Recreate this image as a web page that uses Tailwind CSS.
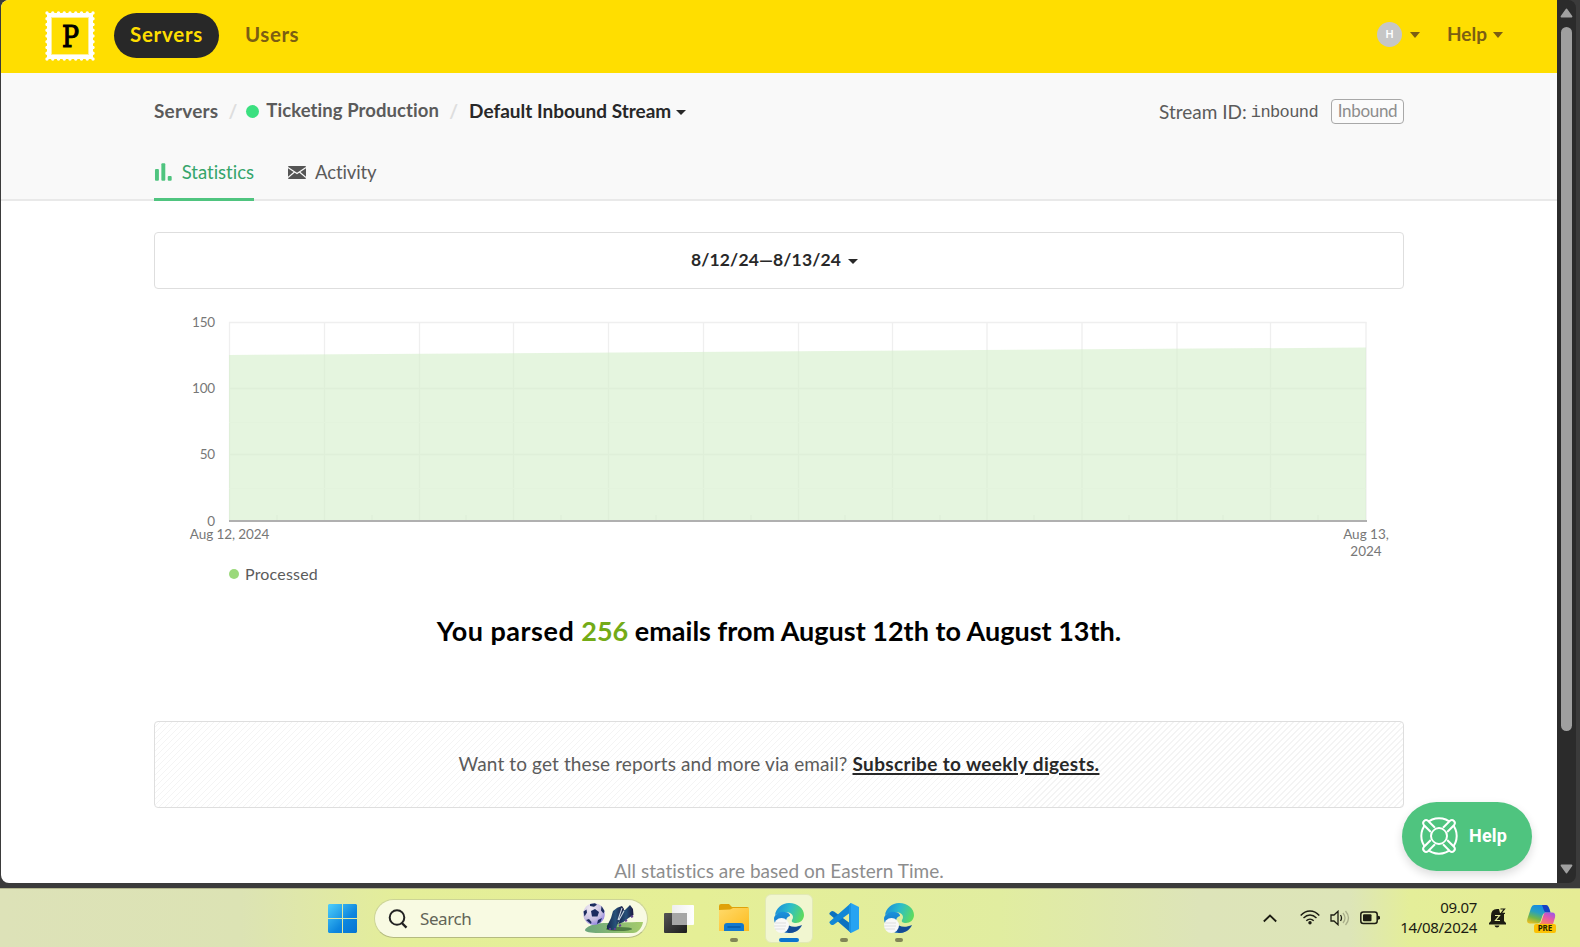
<!DOCTYPE html>
<html lang="en">
<head>
<meta charset="utf-8">
<title>Default Inbound Stream – Statistics</title>
<script src="https://cdn.jsdelivr.net/npm/@tailwindcss/browser@4"></script>
</head>
<body class="w-[1580px] h-[947px] overflow-hidden bg-[#3b3b3b] font-[Lato,sans-serif] flex flex-col whitespace-nowrap">

<!-- browser window -->
<div class="h-[888px] pl-px pr-1 pb-[5px] flex">
  <div class="relative w-[1556px] h-[883px] bg-white rounded-l-lg overflow-hidden flex flex-col [font-variant-ligatures:none]">

    <header class="h-[73px] shrink-0 bg-[#ffde00] flex items-start pl-[44px] pr-[54px] text-[#7b5e13] font-bold">
      <svg class="mt-[11px] w-[50px] h-[50px]" viewBox="0 0 50 50">
        <rect x="2" y="2" width="46" height="46" fill="#fff"/>
        <rect x="2" y="2" width="46" height="46" fill="none" stroke="#fff" stroke-width="3.4" stroke-linecap="round" stroke-dasharray="0.01 5.740"/>
        <rect x="6.500" y="6.500" width="37" height="37" fill="#ffde00" stroke="#fff09a" stroke-width="1"/>
        <text x="25.500" y="36" text-anchor="middle" class="font-['DejaVu_Serif',serif] font-normal text-[30px]" fill="#000" stroke="#000" stroke-width="1.200" textLength="17" lengthAdjust="spacingAndGlyphs">P</text>
      </svg>
      <div class="mt-[13px] ml-[19px] w-[105px] h-[45px] rounded-full bg-[#282828] text-[#ffde00] text-[20.5px] tracking-[0.75px] flex items-center justify-center pb-[2px]">Servers</div>
      <div class="mt-[13px] ml-[26px] h-[45px] text-[20.5px] tracking-[0.55px] flex items-center pb-[2px]">Users</div>
      <div class="mt-[22px] ml-auto size-[25px] rounded-full bg-[#c6c6c6] text-white text-[10.500px] flex items-center justify-center pt-px">H</div>
      <svg class="mt-[32px] ml-[8px] w-[10px] h-[6px]" viewBox="0 0 10 6"><path d="M0 0h10L5 6z" fill="#7b5e13"/></svg>
      <div class="mt-[13px] ml-[27px] h-[45px] text-[19px] flex items-center pb-[2px]">Help</div>
      <svg class="mt-[32px] ml-[6px] w-[10px] h-[6px]" viewBox="0 0 10 6"><path d="M0 0h10L5 6z" fill="#7b5e13"/></svg>
    </header>

    <section class="h-[128px] shrink-0 bg-[#f9f9f9] border-b-2 border-[#e9e9e9] text-[#5b5b5b]">
      <div class="w-[1250px] mx-auto flex flex-col">
        <div class="h-[76px] flex items-center text-[19px] font-bold">
          <span class="tracking-[0.2px]">Servers</span>
          <span class="ml-[10px] w-[9px] text-[#dedede] text-center">/</span>
          <span class="ml-[9px] size-[13px] rounded-full bg-[#3be080]"></span>
          <span class="ml-[7px] text-[18.5px] tracking-[0.08px]">Ticketing Production</span>
          <span class="ml-[10px] w-[9px] text-[#dedede] text-center">/</span>
          <span class="ml-[11px] text-[#282828]">Default Inbound Stream</span>
          <svg class="ml-[5px] mt-[3px] w-[10px] h-[5px]" viewBox="0 0 10 5"><path d="M0 0h10L5 5z" fill="#282828"/></svg>
          <span class="ml-auto font-normal mt-[2px]">Stream ID:</span>
          <span class="ml-[4px] mt-[4px] font-normal font-['Liberation_Mono',monospace] text-[17px] tracking-[-0.600px]">inbound</span>
          <span class="ml-[13px] w-[73px] h-[25px] border border-[#a8a8a8] rounded-[4px] bg-white/30 text-[#8d8d8d] text-[17px] font-normal tracking-[-0.3px] flex items-center justify-center">Inbound</span>
        </div>
        <nav class="h-[52px] flex items-start text-[18.5px]">
          <div class="h-[52px] w-[100px] border-b-3 border-[#4fc47f] text-[#35a56b] flex items-start pt-[12px]">
            <svg class="w-[18px] h-[20px] mt-[1px]" viewBox="0 0 18 20" fill="#4fc47f"><rect x="1" y="7" width="4" height="12" rx="1"/><rect x="7.500" y="1" width="4" height="18" rx="1"/><rect x="14" y="14" width="4" height="5" rx="1"/></svg>
            <span class="ml-[10px] leading-[22px]">Statistics</span>
          </div>
          <div class="ml-[34px] flex items-start pt-[12px]">
            <svg class="w-[18px] h-[13px] mt-[5px]" viewBox="0 0 18 13"><rect width="18" height="13" rx="1" fill="#555"/><path d="M0 1.500l9 6 9-6M0 11.500l6.500-5.500M18 11.500l-6.500-5.500" fill="none" stroke="#f9f9f9" stroke-width="1.200"/></svg>
            <span class="ml-[9px] leading-[22px] tracking-[-0.1px]">Activity</span>
          </div>
        </nav>
      </div>
    </section>

    <main class="w-[1250px] mx-auto pt-[31px] flex flex-col">
      <div class="h-[57px] border border-[#dedede] rounded-[4px] flex items-center justify-center pr-[9px] text-[17.5px] font-bold text-[#282828]">
        <span class="tracking-[0.13px]">8/12/24—8/13/24</span>
        <svg class="ml-[7px] mt-px w-[10px] h-[5px]" viewBox="0 0 10 5"><path d="M0 0h10L5 5z" fill="#282828"/></svg>
      </div>

      <!-- chart -->
      <svg class="mt-[11px] w-[1250px] h-[262px]" viewBox="0 0 1250 262">
        <g stroke="#efefef" stroke-width="1.300">
          <path d="M75.500 22V221M170.500 22V221M265.500 22V221M359.500 22V221M454.500 22V221M549.500 22V221M644.500 22V221M738.500 22V221M833 22V221M928 22V221M1023 22V221M1116.500 22V221M1212 22V221"/>
          <path d="M75 22.500H1212.500M75 88.500H1212.500M75 154.500H1212.500"/>
        </g>
        <path d="M75 122.500H1212M75 188.500H1212" stroke="#fafafa"/>
        <path d="M123 215v6M218 215v6M312 215v6M407 215v6M502 215v6M597 215v6M691 215v6M786 215v6M880 215v6M975 215v6M1069 215v6M1164 215v6" stroke="#ebebeb"/>
        <path d="M75 55L1212 47.500V221H75z" fill="#d4efc9" fill-opacity=".6"/>
        <path d="M75 221H1213" stroke="#b0b0b0" stroke-width="2"/>
        <g fill="#777" class="text-[13.500px]">
          <g text-anchor="end" class="tracking-[-0.2px]"><text x="61" y="27">150</text><text x="61" y="93">100</text><text x="61" y="159">50</text><text x="61" y="226">0</text></g>
          <g text-anchor="middle"><text x="75.500" y="239" class="tracking-[-0.1px]">Aug 12, 2024</text><text x="1212" y="239">Aug 13,</text><text x="1212" y="256">2024</text></g>
        </g>
      </svg>
      <div class="-mt-px pl-[75px] h-[26px] flex items-center text-[16px] text-[#5b5b5b]">
        <span class="size-[10px] rounded-full bg-[#9bd97b]"></span>
        <span class="ml-[6px] tracking-[0.2px]">Processed</span>
      </div>

      <h1 class="mt-[15px] h-[58px] text-center text-[27px] leading-[58px] font-bold text-black"><span class="tracking-[0.5px]">You parsed </span><span class="text-[#73ab17]">256</span> emails from August 12th to August 13th.</h1>

      <div class="mt-[61px] h-[87px] border border-[#dedede] rounded-[4px] flex items-center justify-center gap-[5px] text-[19px] text-[#5b5b5b] bg-[repeating-linear-gradient(135deg,#fff_0px,#fff_3.240px,#f4f4f4_3.240px,#f4f4f4_4.240px)]">
        <span class="tracking-[0.12px]">Want to get these reports and more via email?</span>
        <a class="font-bold text-[#282828] underline underline-offset-[2px] decoration-[1.500px] tracking-[0.35px]">Subscribe to weekly digests.</a>
      </div>

      <p class="mt-[51px] text-center text-[19px] leading-[24px] text-[#8d8d8d] tracking-[0.04px]">All statistics are based on Eastern Time.</p>
    </main>

    <!-- floating help button -->
    <div class="absolute left-[1401px] top-[802px] w-[130px] h-[69px] rounded-full bg-[#4fc47f] shadow-[0_4px_10px_rgba(0,0,0,0.14)] flex items-center pl-[18px] pb-[2px] font-[Roboto,sans-serif] text-white text-[18px] font-bold">
      <svg class="w-[38px] h-[38px]" viewBox="0 0 38 38" fill="none" stroke="#fff" stroke-width="2">
        <circle cx="19" cy="19" r="17.700"/><circle cx="19" cy="19" r="8"/>
        <path d="M10.800 15L3.800 8A3 3 0 0 1 8 3.800L15 10.800M27.200 15L34.200 8A3 3 0 0 0 30 3.800L23 10.800M10.800 23L3.800 30A3 3 0 0 0 8 34.200L15 27.200M27.200 23L34.200 30A3 3 0 0 1 30 34.200L23 27.200" fill="#4fc47f"/>
      </svg>
      <span class="ml-[11px] tracking-[0.2px]">Help</span>
    </div>
  </div>

  <!-- scrollbar -->
  <div class="w-[19px] h-[883px] bg-[#2b2b2b] rounded-r-lg flex flex-col items-start pl-[3px]">
    <svg class="mt-[8px] w-[13px] h-[10px]" viewBox="0 0 13 10"><path d="M6.500 1.500L11.500 8.500H1.500z" fill="#a0a0a0" stroke="#a0a0a0" stroke-width="1.800" stroke-linejoin="round"/></svg>
    <div class="mt-[9px] ml-px w-[11px] h-[704px] rounded-full bg-[#9f9f9f]"></div>
    <svg class="mt-[133px] w-[13px] h-[10px]" viewBox="0 0 13 10"><path d="M6.500 8.500L11.500 1.500H1.500z" fill="#a0a0a0" stroke="#a0a0a0" stroke-width="1.800" stroke-linejoin="round"/></svg>
  </div>
</div>

<!-- taskbar -->
<div class="h-[59px] border-t border-[#b3b68d] bg-[linear-gradient(90deg,#dde2b8_0px,#dce3b4_240px,#e4ee99_400px,#e5ef96_700px,#e1eda0_1000px,#dde4b9_1200px,#dde5b8_1350px,#e4ee99_1410px,#e6ec95_1580px)] flex items-start font-['Noto_Sans',sans-serif] text-[#1c1c12]">
  <svg class="ml-[328px] mt-[15px] w-[29px] h-[29px]" viewBox="0 0 29 29">
    <defs><linearGradient id="win" gradientUnits="userSpaceOnUse" x1="0" y1="0" x2="29" y2="29"><stop stop-color="#4fd0fb"/><stop offset=".6" stop-color="#0d86de"/><stop offset="1" stop-color="#0574d2"/></linearGradient></defs>
    <path d="M1 0h13v14H0V1zM15 0h13l1 1v13H15zM0 15h14v14H1l-1-1zM15 15h14v13l-1 1H15z" fill="url(#win)"/>
  </svg>
  <div class="ml-[17px] mt-[10px] w-[274px] h-[39px] rounded-full border border-[#ccd496] border-b-[#b5bb80] bg-[#f8fae2] flex items-center pl-[13px]">
    <svg class="w-[20px] h-[20px]" viewBox="0 0 20 20" fill="none" stroke="#222" stroke-width="2"><circle cx="9" cy="8.500" r="7.300"/><path d="M13.800 14L18.500 18.700" stroke-width="2.400"/></svg>
    <span class="ml-[12px] text-[17px] tracking-[-0.4px] text-[#626456]">Search</span>
    <svg class="ml-auto mr-[3px] w-[61px] h-[33px]" viewBox="0 0 61 33">
      <defs>
        <linearGradient id="grass"><stop stop-color="#6ba57c"/><stop offset="1" stop-color="#a5cc6c"/></linearGradient>
        <radialGradient id="ball" cx=".35" cy=".25" r=".9"><stop stop-color="#f0eaf2"/><stop offset=".6" stop-color="#c5bde0"/><stop offset="1" stop-color="#7d69e8"/></radialGradient>
        <linearGradient id="boot" x1="0" y1="0" x2="1" y2="0"><stop stop-color="#15264c"/><stop offset=".5" stop-color="#27527a"/><stop offset="1" stop-color="#1a1740"/></linearGradient>
      </defs>
      <path d="M2 28c1-3 8-7 19-7 14 0 22-1 39-1-1 6-5 11-10 11H16C7 31 2 30 2 28z" fill="url(#grass)"/>
      <ellipse cx="36" cy="27" rx="13" ry="2" fill="#4f7d43"/>
      <circle cx="11" cy="12" r="10.800" fill="url(#ball)"/>
      <path d="M8 9l4-2 4 3-1.500 4.500H9zM7 1.900l5-.7 2 1.500-3 2-4-.8zM18.500 4l3 5-1 2.500-2.500-3zM.5 9.500l3-2 .5 3-2.500 4zM3 18l3-1 2.500 3-.5 2zM15 18l4-2-1.500 4-3.500 2z" fill="#1b2c5e"/>
      <path d="M30 9q4-4 9-5l2 3-2 8-5 8-1 4q-4 2-9 0-1-3 1-5l3-6z" fill="url(#boot)"/>
      <path d="M39 9q3 0 5-3l3-3 3 4 .500 6-5 3-5 4-5 2 2-7z" fill="url(#boot)"/>
      <path d="M39 6l-4 12M36 18l5-9" stroke="#c9d5df" stroke-width="1.100" fill="none"/>
      <path d="M26 27h2M31 27h2M36 24l2-1M42 19l2-1M48 15l2-1" stroke="#63408f" stroke-width="2"/>
    </svg>
  </div>

  <div class="ml-[8px] mt-[5px] w-[48px] h-[50px] flex items-center justify-center">
    <svg class="w-[30px] h-[28px] -ml-[2px]" viewBox="0 0 30 28">
      <defs><linearGradient id="tv" x1="0" x2="1" y1="0" y2="1"><stop stop-color="#555"/><stop offset="1" stop-color="#1c1c1c"/></linearGradient><linearGradient id="tf"><stop stop-color="#eee"/><stop offset="1" stop-color="#fff"/></linearGradient></defs>
      <rect y="8" width="23" height="20" rx="1" fill="url(#tv)"/><rect x="8" width="22" height="20" rx="1" fill="url(#tf)"/><rect x="8" y="8" width="15" height="12" fill="#a6a6a6"/>
    </svg>
  </div>
  <div class="ml-[6px] mt-[5px] w-[48px] h-[50px] flex flex-col items-center pt-[10px]">
    <svg class="w-[30px] h-[28px]" viewBox="0 0 30 28">
      <defs><linearGradient id="fo" x1="0" y1="0" x2="1" y2="1"><stop stop-color="#ffda6a"/><stop offset="1" stop-color="#fdbb1d"/></linearGradient></defs>
      <path d="M0 2q0-2 2-2h8l3 3h15q2 0 2 2v4H0z" fill="#dfa20a"/><path d="M0 6l11-.5L14 4h16v23H0z" fill="url(#fo)"/>
      <path d="M5 27v-5q0-3 3-3h14q3 0 3 3v5z" fill="#1279cf"/><path d="M9 23h12" stroke="#075aa8" stroke-width="1.500" stroke-linecap="round"/>
    </svg>
    <span class="mt-[6px] w-[8px] h-[4px] rounded-full bg-[#818557]"></span>
  </div>
  <div class="ml-[7px] mt-[5px] w-[48px] h-[49px] rounded-md bg-[#f1f6d0] border border-[#e2e9b5] flex flex-col items-center pt-[8px]">
    <svg class="w-[30px] h-[30px]" viewBox="0 0 30 30">
      <defs>
        <linearGradient id="e1" x1="0" y1=".3" x2="1" y2=".6"><stop stop-color="#1a8fd8"/><stop offset=".45" stop-color="#2bbccc"/><stop offset="1" stop-color="#5fdc5b"/></linearGradient>
        <linearGradient id="e2" x1="0" y1="0" x2="0" y2="1"><stop stop-color="#1a93dc"/><stop offset="1" stop-color="#1464b8"/></linearGradient>
      </defs>
      <g id="edge">
        <path d="M1 12C2 5 8 0 15 0c9 0 15 6 15 12 0 5-4 8-8 8-3 0-5-1-4-3 3-4-1-8-6-8-5 0-9 2-11 3z" fill="url(#e1)"/>
        <path d="M0 15c1-4 6-7 11-6 3 0 5 2 5 4-4 1-5 5-3 9 3 5 8 6 12 3-2 3-6 5-10 5C6 30 0 23 0 15z" fill="url(#e2)"/>
        <path d="M12 20c3 4 9 5 16 2-2 5-7 8-13 8-3-2-4-6-3-10z" fill="#144c96"/>
        <circle cx="7.500" cy="22.500" r="7.500" fill="#f8f8f8"/><path d="M1 20h11M0 23h12M1 26h10" stroke="#dedede"/>
      </g>
    </svg>
    <span class="mt-[5px] w-[20px] h-[4px] rounded-full bg-[#0a75cf]"></span>
  </div>
  <div class="ml-[7px] mt-[5px] w-[48px] h-[50px] flex flex-col items-center pt-[9px]">
    <svg class="w-[30px] h-[30px]" viewBox="0 0 30 30">
      <path d="M22 0l8 4v22l-8 4z" fill="#26a3f2"/><path d="M1 9.500q1.500-2.500 4-1L22 21v9L.8 11.500q-1-.8.200-2z" fill="#0b72c0"/><path d="M1 20.500q1.500 2.500 4 1L22 9V0L.8 18.500q-1 .8.200 2z" fill="#1187d6"/><path d="M22 0l-2 2v26l2 2z" fill="#1b93e2"/>
    </svg>
    <span class="mt-[5px] w-[8px] h-[4px] rounded-full bg-[#818557]"></span>
  </div>
  <div class="ml-[7px] mt-[5px] w-[48px] h-[50px] flex flex-col items-center pt-[9px]">
    <svg class="w-[30px] h-[30px]" viewBox="0 0 30 30"><use href="#edge"/></svg>
    <span class="mt-[5px] w-[8px] h-[4px] rounded-full bg-[#818557]"></span>
  </div>

  <div class="ml-auto pr-[23px] h-[58px] flex items-start">
    <svg class="mt-[25px] w-[14px] h-[9px]" viewBox="0 0 14 9" fill="none" stroke="#1c1c12" stroke-width="1.800"><path d="M.8 7.500L7 1.500l6.200 6"/></svg>
    <svg class="ml-[23px] mt-[21px] w-[20px] h-[15px]" viewBox="0 0 20 15" fill="none" stroke="#1c1c12" stroke-width="1.400"><path d="M.7 5.500C6-.5 14-.5 19.300 5.500M3.500 8C7.500 4 12.500 4 16.500 8M6.300 10.800C8.500 8.500 11.500 8.500 13.700 10.800"/><circle cx="10" cy="12.800" r="1.700" fill="#1c1c12" stroke="none"/></svg>
    <svg class="ml-[10px] mt-[21px] w-[20px] h-[16px]" viewBox="0 0 20 16" fill="none" stroke="#1c1c12" stroke-width="1.300"><path d="M1 5h3l4-3.700v13.400L4 11H1zM10.500 5q2 3 0 6"/><path d="M13 3q4 5 0 10M15.500 1q6 7 0 14" stroke="#a9ae8a"/></svg>
    <svg class="ml-[10px] mt-[22px] w-[20px] h-[14px]" viewBox="0 0 20 14"><rect x=".8" y="1" width="16.400" height="11.500" rx="2.500" fill="none" stroke="#1c1c12" stroke-width="1.500"/><rect x="3" y="3.200" width="8.500" height="7" rx="1" fill="#1c1c12"/><path d="M17.500 4.500l2.500 1v2.500l-2.500 1z" fill="#1c1c12"/></svg>
    <div class="ml-[20px] mt-[8px] w-[77px] text-right text-[15px] leading-[20px] tracking-[-0.3px]"><div>09.07</div><div>14/08/2024</div></div>
    <svg class="ml-[12px] mt-[19px] w-[17px] h-[20px]" viewBox="0 0 17 20"><path d="M2 8q0-7 6-7h2l1 4h5q-1.500 1-1 3v5l2 2v1.500H0V15l2-2zM5.500 17.500h5q-.5 2-2.500 2t-2.500-2z" fill="#1c1c12"/><path d="M11.500 1h4L12 5.300h4" fill="none" stroke="#1c1c12" stroke-width="1.200"/><path d="M6 7.500h4.500l-4 5H11" fill="none" stroke="#e4ee99" stroke-width="1.200"/></svg>
    <svg class="ml-[21px] mt-[16px] w-[30px] h-[29px]" viewBox="0 0 30 29">
      <defs>
        <linearGradient id="c1" x1=".6" y1="0" x2=".2" y2="1"><stop stop-color="#1689e6"/><stop offset=".4" stop-color="#27a0c0"/><stop offset=".7" stop-color="#6fb64c"/><stop offset="1" stop-color="#e8bd20"/></linearGradient>
        <linearGradient id="c2" x1=".8" y1="0" x2=".2" y2="1"><stop stop-color="#a154e6"/><stop offset=".5" stop-color="#e85aa5"/><stop offset="1" stop-color="#fb8a5b"/></linearGradient>
      </defs>
      <path d="M7 0h12q2 0 3 3l1.500 4.500h-4q-3 0-4 3l-2 6q-1 2-3 2H3q-4 0-2.500-5L4 3q1-3 3-3z" fill="url(#c1)"/><path d="M15 0h4q2 0 3 3l1.500 4.500h-4q-2 0-2.500-2z" fill="#1740c4"/>
      <path d="M18 7.500h7q4 0 3 5l-2 6.500H12q2-1 2.500-3l2-6q.5-2.500 1.500-2.500z" fill="url(#c2)"/>
      <rect x="7" y="19" width="22" height="9" rx="2" fill="#fcc203"/>
      <text x="18" y="26.400" text-anchor="middle" class="font-['Noto_Sans',sans-serif] font-bold text-[8px]" fill="#2a2200">PRE</text>
    </svg>
  </div>
</div>
</body>
</html>
